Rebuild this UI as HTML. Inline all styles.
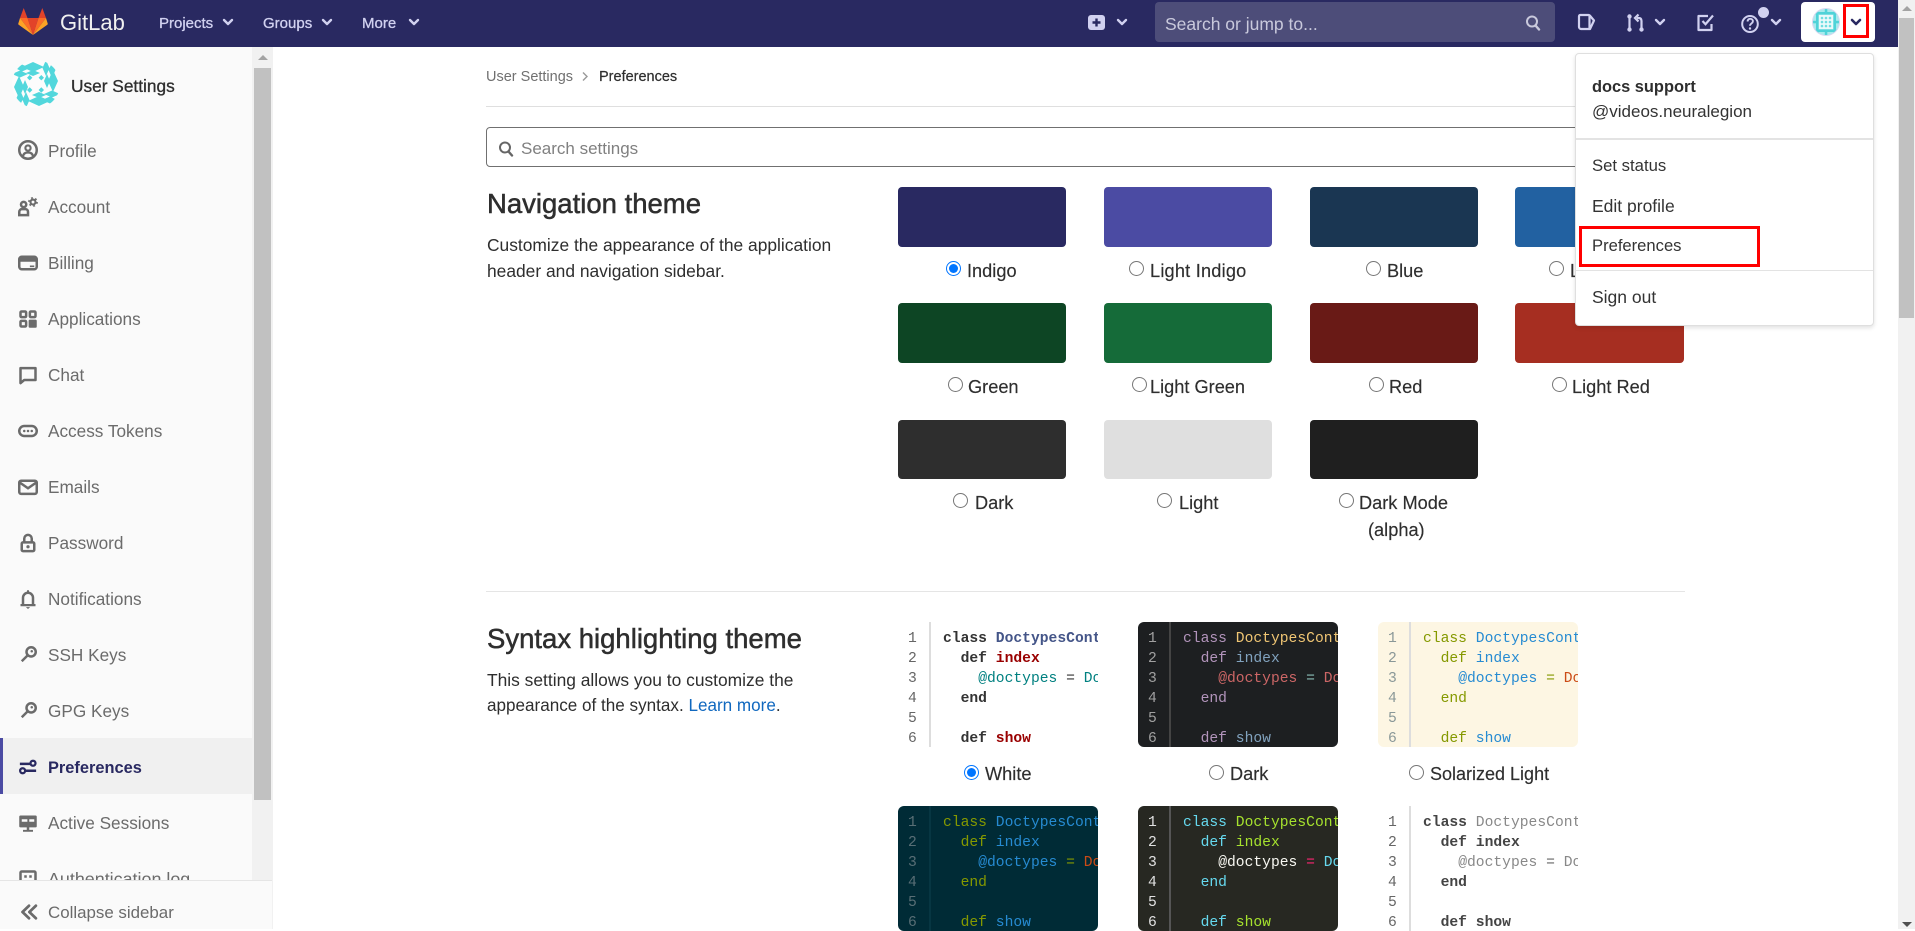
<!DOCTYPE html>
<html lang="en"><head><meta charset="utf-8"><title>Preferences · User Settings · GitLab</title>
<style>
html,body{margin:0;padding:0;width:1915px;height:929px;overflow:hidden;background:#fff;font-family:"Liberation Sans",sans-serif;color:#2e2e2e}
.a,.t,svg.i{position:absolute}
.t{white-space:nowrap;line-height:20px}
.n{font-size:15px;color:#d1d1f0;-webkit-text-stroke:.3px #d1d1f0;top:14px}
.s{font-size:17.2px;color:#6b6b6b;left:48px}
.m{font-size:17px;color:#333;left:1592px}
.l{font-size:18.2px;color:#2e2e2e;-webkit-text-stroke:.15px #2e2e2e}
.h{font-size:27.5px;line-height:32px;color:#2e2e2e;-webkit-text-stroke:.5px #2e2e2e}
.d{font-size:17.4px;color:#2e2e2e}
input{position:absolute;width:15px;height:15px;margin:0}
.sw{position:absolute;width:168px;height:60px;border-radius:4px}
.cb{position:absolute;width:200px;height:125px;overflow:hidden;border-radius:6px;font:14.67px/20px "Liberation Mono",monospace}
.cb pre{margin:0;font:inherit;position:absolute;top:7px}
.cb .nm{left:10px}.cb .cd{left:45px;width:155px;overflow:hidden}
.cb .g{position:absolute;left:31px;top:0;bottom:0;width:2px}
.w{background:#fff}.w .g{background:#ddd}.w .nm{color:#666}.w .k{color:#333;font-weight:bold}.w .c{color:#458;font-weight:bold}.w .f{color:#900;font-weight:bold}.w .v{color:#008080}.w .o{color:#333}.w .e{color:#008080}
.dk{background:#1d1f21}.dk .g{background:#444}.dk .nm{color:#a0a0a0}.dk .k{color:#b294bb}.dk .c{color:#f0c674}.dk .f{color:#81a2be}.dk .v{color:#c66}.dk .o{color:#8abeb7}.dk .e{color:#c66}
.sl{background:#fdf6e3}.sl .g{background:#ddd}.sl .nm{color:#8a9898}.sl .k{color:#859900}.sl .c,.sl .f,.sl .v{color:#268bd2}.sl .o{color:#859900}.sl .e{color:#cb4b16}
.sd{background:#002b36}.sd .g{background:#073642}.sd .nm{color:#586e75}.sd .k{color:#859900}.sd .c,.sd .f,.sd .v{color:#268bd2}.sd .o{color:#859900}.sd .e{color:#cb4b16}
.mk{background:#272822}.mk .g{background:#555}.mk .nm{color:#e0e0e0}.mk .k{color:#66d9ef}.mk .c,.mk .f{color:#a6e22e}.mk .v{color:#f8f8f2}.mk .o{color:#f92672}.mk .e{color:#66d9ef}
.no{background:#fff}.no .g{background:#ddd}.no .nm{color:#666}.no .k,.no .f{color:#444;font-weight:bold}.no .c,.no .v,.no .e{color:#888}.no .o{color:#666}
.ic{fill:none;stroke:#6b6b6b;stroke-width:2}
.if{fill:#6b6b6b;stroke:none}
.ch{fill:none;stroke:#d1d1f0;stroke-width:2.4;stroke-linecap:round;stroke-linejoin:round}
</style></head><body>

<svg width="0" height="0" style="position:absolute"><defs>
<clipPath id="cl"><circle cx="24" cy="24" r="24"/></clipPath>
<path id="qt" d="M10 7L21 2l11 5-11 5zM14 13l7-3 7 3-7 3zM34 0l3.500 8L34 16l-3.500-8zM40 3l3.500 7-3.500 8-3.500-8z"/>
<g id="av" clip-path="url(#cl)"><circle cx="24" cy="24" r="24" fill="#fcfcfc"/>
<g fill="#52d7dc">
<use href="#qt"/><use href="#qt" transform="rotate(90 24 24)"/><use href="#qt" transform="rotate(180 24 24)"/><use href="#qt" transform="rotate(270 24 24)"/>
<path d="M17.700 15l2.700 2.700-2.700 2.700-2.700-2.700zM29.300 15l2.700 2.700-2.700 2.700-2.700-2.700zM17.700 27.300l2.700 2.700-2.700 2.700-2.700-2.700zM29.300 27.300l2.700 2.700-2.700 2.700-2.700-2.700z"/>
</g></g>
<clipPath id="cs"><circle cx="14" cy="14" r="13.500"/></clipPath>
</defs></svg>

<!-- sidebar -->
<div class="a" style="left:0;top:47px;width:273px;height:882px;background:#fafafa;overflow:hidden">
  <div class="a" style="left:252px;top:0;width:21px;height:882px;background:#f1f1f1"></div>
  <div class="a" style="left:254px;top:21px;width:17px;height:732px;background:#c1c1c1"></div>
  <div class="a" style="left:258px;top:8px;width:0;height:0;border-left:5px solid transparent;border-right:5px solid transparent;border-bottom:5px solid #a3a3a3"></div>
  <div class="a" style="left:0;top:691px;width:252px;height:56px;background:#f0f0f0"></div>
  <div class="a" style="left:0;top:691px;width:3px;height:56px;background:#4b4ba3"></div>
</div>
<svg class="i" style="left:12px;top:60px" width="48" height="48" viewBox="0 0 48 48"><use href="#av"/></svg>
<div class="t" style="left:71px;top:76px;font-size:17.3px;color:#2e2e2e;-webkit-text-stroke:.3px #2e2e2e">User Settings</div>

<div class="t s" style="top:141px">Profile</div>
<svg class="i" style="left:18px;top:140px" width="20" height="20" viewBox="0 0 16 16"><circle class="ic" cx="8" cy="8" r="7"/><circle cx="8" cy="6.400" r="2.100" fill="none" stroke="#6b6b6b" stroke-width="1.700"/><path d="M4 13c.3-2 1.800-3 4-3s3.700 1 4 3" fill="none" stroke="#6b6b6b" stroke-width="1.800"/></svg>
<div class="t s" style="top:197px">Account</div>
<svg class="i" style="left:18px;top:197px" width="20" height="20" viewBox="0 0 16 16"><circle class="ic" cx="4.500" cy="6" r="2.100" stroke-width="1.800"/><path class="ic" d="M1 14.500v-2.500c0-1.300 1-2.300 2-2.300h3c1.200 0 2 1 2 2.300v2.500z" stroke-width="1.800"/><circle cx="12" cy="4" r="2" fill="none" stroke="#6b6b6b" stroke-width="1.700"/><circle cx="12" cy="4" r="3.300" fill="none" stroke="#6b6b6b" stroke-width="1.200" stroke-dasharray="1.500 1.960"/></svg>
<div class="t s" style="top:253px">Billing</div>
<svg class="i" style="left:18px;top:253px" width="20" height="20" viewBox="0 0 16 16"><rect class="ic" x="1" y="3" width="14" height="10" rx="2"/><rect class="if" x="1" y="4" width="14" height="3"/><rect class="if" x="9.500" y="10" width="3.500" height="1.300"/></svg>
<div class="t s" style="top:309px">Applications</div>
<svg class="i" style="left:18px;top:309px" width="20" height="20" viewBox="0 0 16 16"><rect class="ic" x="2" y="2" width="4.500" height="4.500" rx=".8"/><rect class="ic" x="9.500" y="2" width="4.500" height="4.500" rx=".8"/><rect class="ic" x="2" y="9.500" width="4.500" height="4.500" rx=".8"/><rect class="if" x="8.500" y="8.500" width="6.500" height="6.500" rx="1"/></svg>
<div class="t s" style="top:365px">Chat</div>
<svg class="i" style="left:18px;top:365px" width="20" height="20" viewBox="0 0 16 16"><path class="ic" d="M2 2.500h12v9.500H5l-3 2.500z" stroke-linejoin="round"/></svg>
<div class="t s" style="top:421px">Access Tokens</div>
<svg class="i" style="left:18px;top:421px" width="20" height="20" viewBox="0 0 16 16"><rect class="ic" x="1" y="4" width="14" height="8" rx="4"/><circle class="if" cx="5" cy="8" r="1"/><circle class="if" cx="8" cy="8" r="1"/><circle class="if" cx="11" cy="8" r="1"/></svg>
<div class="t s" style="top:477px">Emails</div>
<svg class="i" style="left:18px;top:477px" width="20" height="20" viewBox="0 0 16 16"><rect class="ic" x="1" y="3" width="14" height="10.500" rx="1.500"/><path class="ic" d="M1.500 4.500L8 9l6.500-4.500"/></svg>
<div class="t s" style="top:533px">Password</div>
<svg class="i" style="left:18px;top:533px" width="20" height="20" viewBox="0 0 16 16"><path class="ic" d="M5 7V4.500a3 3 0 016 0V7" stroke-width="1.800"/><rect class="ic" x="3" y="7.500" width="10" height="7" rx="1"/><circle class="if" cx="8" cy="11" r="1.300"/></svg>
<div class="t s" style="top:589px">Notifications</div>
<svg class="i" style="left:18px;top:589px" width="20" height="20" viewBox="0 0 16 16"><path class="ic" d="M4 12.500V7a4 4 0 018 0v5.500" stroke-width="1.900"/><path class="if" d="M2 12h12v1.800H2zM6.300 14.500h3.400L8 16z"/><rect class="if" x="7.200" y="1" width="1.600" height="2"/></svg>
<div class="t s" style="top:645px">SSH Keys</div>
<svg class="i" style="left:18px;top:645px" width="20" height="20" viewBox="0 0 16 16"><circle class="ic" cx="10.500" cy="5.500" r="3.700"/><path class="ic" d="M7.800 8.200L3 13" stroke-width="3"/><circle class="if" cx="11" cy="5" r="1"/></svg>
<div class="t s" style="top:701px">GPG Keys</div>
<svg class="i" style="left:18px;top:701px" width="20" height="20" viewBox="0 0 16 16"><circle class="ic" cx="10.500" cy="5.500" r="3.700"/><path class="ic" d="M7.800 8.200L3 13" stroke-width="3"/><circle class="if" cx="11" cy="5" r="1"/></svg>
<div class="t s" style="top:758px;color:#292961;font-weight:bold;font-size:16.400px">Preferences</div>
<svg class="i" style="left:18px;top:757px" width="20" height="20" viewBox="0 0 16 16"><path d="M1.500 5.500H10M6 11h8.500" stroke="#292961" stroke-width="2" fill="none"/><circle cx="12" cy="5" r="2" fill="none" stroke="#292961" stroke-width="1.800"/><circle cx="3.700" cy="11" r="2" fill="none" stroke="#292961" stroke-width="1.800"/></svg>
<div class="t s" style="top:813px">Active Sessions</div>
<svg class="i" style="left:18px;top:813px" width="20" height="20" viewBox="0 0 16 16"><rect class="if" x="1" y="2" width="14" height="9.500" rx="1"/><rect x="3" y="5" width="4.500" height="2" fill="#fafafa"/><rect x="9" y="5" width="4" height="2" fill="#fafafa"/><path class="if" d="M7 11h2v2.500h3V15H4v-1.500h3z"/></svg>
<div class="t s" style="top:869px;font-size:17.900px">Authentication log</div>
<svg class="i" style="left:18px;top:869px" width="20" height="20" viewBox="0 0 16 16"><rect class="ic" x="2" y="2" width="12" height="12" rx="1"/><g class="if"><rect x="5" y="5" width="2" height="2"/><rect x="9" y="5" width="2" height="2"/><rect x="5" y="9" width="2" height="2"/><rect x="9" y="9" width="2" height="2"/></g></svg>
<div class="a" style="left:0;top:880px;width:272px;height:49px;background:#fafafa;border-top:1px solid #e5e5e5;box-sizing:border-box"></div>
<div class="t s" style="top:903px;font-size:16.900px">Collapse sidebar</div>
<svg class="i" style="left:19px;top:902px" width="20" height="20" viewBox="0 0 16 16"><path d="M8 3L2.800 8 8 13M13.500 3L8.300 8l5.200 5" fill="none" stroke="#6b6b6b" stroke-width="2.200" stroke-linecap="round" stroke-linejoin="round"/></svg>

<!-- header -->
<div class="a" style="left:0;top:0;width:1898px;height:47px;background:#292961"></div>
<svg class="i" style="left:18px;top:8px" width="30" height="27" viewBox="0 0 30 27"><path fill="#e24329" d="M15 27L9.500 10h11zM2 10L5.700 0l3.800 10zM28 10L24.300 0l-3.800 10z"/><path fill="#fc6d26" d="M15 27L9.500 10H2zM15 27l5.500-17H28z"/><path fill="#fca326" d="M2 10L.3 15.500c-.2.500 0 1 .4 1.300L15 27zM28 10l1.700 5.500c.2.500 0 1-.4 1.300L15 27z"/></svg>
<div class="t" style="left:60px;top:13px;font-size:22px;color:#f0f0f0">GitLab</div>
<div class="t n" style="left:159px">Projects</div>
<svg class="i" style="left:222px;top:18px" width="12" height="9" viewBox="0 0 12 9"><path class="ch" d="M2 2l4 4 4-4"/></svg>
<div class="t n" style="left:263px">Groups</div>
<svg class="i" style="left:321px;top:18px" width="12" height="9" viewBox="0 0 12 9"><path class="ch" d="M2 2l4 4 4-4"/></svg>
<div class="t n" style="left:362px">More</div>
<svg class="i" style="left:408px;top:18px" width="12" height="9" viewBox="0 0 12 9"><path class="ch" d="M2 2l4 4 4-4"/></svg>

<svg class="i" style="left:1088px;top:14px" width="17" height="17" viewBox="0 0 17 17"><rect x="0" y="1" width="17" height="15" rx="3" fill="#d1d1f0"/><path d="M8.500 4.500v8M4.500 8.500h8" stroke="#292961" stroke-width="2.400"/></svg>
<svg class="i" style="left:1116px;top:18px" width="12" height="9" viewBox="0 0 12 9"><path class="ch" d="M2 2l4 4 4-4"/></svg>
<div class="a" style="left:1155px;top:2px;width:400px;height:40px;background:#4d4d79;border-radius:4px"></div>
<div class="t" style="left:1165px;top:14px;font-size:17.500px;color:#c9c9dc">Search or jump to...</div>
<svg class="i" style="left:1525px;top:15px" width="16" height="16" viewBox="0 0 16 16"><circle cx="7" cy="6.500" r="5" fill="none" stroke="#c9c9dc" stroke-width="2"/><path d="M10.500 10.500L14 14.500" stroke="#c9c9dc" stroke-width="2.400" stroke-linecap="round"/></svg>
<!-- issues -->
<svg class="i" style="left:1577px;top:13px" width="20" height="20" viewBox="0 0 20 20"><path d="M3 2h8.500c.6 0 1 .2 1.300.5l4.200 5-4 8.500H4c-1 0-2-1-2-2V3.500C2 2.700 2.400 2 3 2zM12.500 2.500V15" fill="none" stroke="#d1d1f0" stroke-width="2.200" stroke-linejoin="round"/></svg>
<!-- merge requests -->
<svg class="i" style="left:1626px;top:13px" width="20" height="20" viewBox="0 0 20 20"><path d="M3.500 5v10M15.500 15V8c0-1.800-1-3-3-3H11" fill="none" stroke="#d1d1f0" stroke-width="2.200"/><path d="M12.500 1.500L9 5l3.500 3.500" fill="none" stroke="#d1d1f0" stroke-width="2.200"/><circle cx="3.500" cy="3.500" r="2.200" fill="#d1d1f0"/><circle cx="3.500" cy="16.500" r="2.200" fill="#d1d1f0"/><circle cx="15.500" cy="16.500" r="2.200" fill="#d1d1f0"/></svg>
<svg class="i" style="left:1654px;top:18px" width="12" height="9" viewBox="0 0 12 9"><path class="ch" d="M2 2l4 4 4-4"/></svg>
<!-- todos -->
<svg class="i" style="left:1696px;top:13px" width="19" height="19" viewBox="0 0 19 19"><path d="M12 3H2.500v14h13V11" fill="none" stroke="#d1d1f0" stroke-width="2.200" stroke-linejoin="round"/><path d="M6.500 8l3 3.200L17 2.500" fill="none" stroke="#d1d1f0" stroke-width="2.200"/></svg>
<!-- help -->
<svg class="i" style="left:1741px;top:14px" width="18" height="19" viewBox="0 0 18 19"><ellipse cx="9" cy="10" rx="7.800" ry="8" fill="none" stroke="#d1d1f0" stroke-width="2"/><path d="M6.500 7.500c.3-2 1.500-2.700 2.700-2.700 1.500 0 2.700 1 2.700 2.400 0 2.200-2.900 2.300-2.900 4.600" fill="none" stroke="#d1d1f0" stroke-width="1.900"/><circle cx="9" cy="14.500" r="1.200" fill="#d1d1f0"/></svg>
<div class="a" style="left:1758px;top:7px;width:11px;height:11px;border-radius:50%;background:#d1d1f0"></div>
<svg class="i" style="left:1770px;top:18px" width="12" height="9" viewBox="0 0 12 9"><path class="ch" d="M2 2l4 4 4-4"/></svg>
<div class="a" style="left:1801px;top:2px;width:74px;height:40px;background:#fff;border-radius:4px"></div>
<svg class="i" style="left:1812px;top:8px" width="28" height="28" viewBox="0 0 28 28"><g clip-path="url(#cs)"><rect width="28" height="28" fill="#a9eaed"/>
<g fill="#4fd3d8"><rect x="0" y="4" width="28" height="2.500"/><rect x="0" y="21.500" width="28" height="2.500"/><rect x="4" y="0" width="2.500" height="28"/><rect x="21.500" y="0" width="2.500" height="28"/><rect x="0" y="12.800" width="6" height="2.500"/><rect x="22" y="12.800" width="6" height="2.500"/><rect x="12.800" y="0" width="2.500" height="6"/><rect x="12.800" y="22" width="2.500" height="6"/></g>
<rect x="7" y="7" width="14" height="14" fill="#eafafb"/>
<g fill="#6fdde1"><circle cx="10" cy="10" r="1.300"/><circle cx="14" cy="10" r="1.300"/><circle cx="18" cy="10" r="1.300"/><circle cx="10" cy="14" r="1.300"/><circle cx="14" cy="14" r="1.300"/><circle cx="18" cy="14" r="1.300"/><circle cx="10" cy="18" r="1.300"/><circle cx="14" cy="18" r="1.300"/><circle cx="18" cy="18" r="1.300"/></g></g><circle cx="14" cy="14" r="13.500" fill="none" stroke="#d8d8f0" stroke-width="1"/></svg>
<div class="a" style="left:1843px;top:4px;width:26px;height:34px;border:3px solid #f00;box-sizing:border-box"></div>
<svg class="i" style="left:1850px;top:18px" width="12" height="9" viewBox="0 0 12 9"><path d="M2 2l4 4 4-4" fill="none" stroke="#292961" stroke-width="2.600" stroke-linecap="round" stroke-linejoin="round"/></svg>

<!-- page scrollbar -->
<div class="a" style="left:1898px;top:0;width:17px;height:929px;background:#f1f1f1"></div>
<div class="a" style="left:1899px;top:18px;width:15px;height:300px;background:#c1c1c1"></div>
<div class="a" style="left:1902px;top:6px;width:0;height:0;border-left:5px solid transparent;border-right:5px solid transparent;border-bottom:5px solid #a3a3a3"></div>
<div class="a" style="left:1902px;top:922px;width:0;height:0;border-left:5px solid transparent;border-right:5px solid transparent;border-top:5px solid #505050"></div>

<!-- content -->
<div class="t" style="left:486px;top:67px;font-size:14.500px;color:#707070">User Settings</div>
<svg class="i" style="left:581px;top:71px" width="8" height="11" viewBox="0 0 8 11"><path d="M2 1.500l4 4-4 4" fill="none" stroke="#999" stroke-width="1.400"/></svg>
<div class="t" style="left:599px;top:67px;font-size:14.500px;color:#2e2e2e;-webkit-text-stroke:.2px #2e2e2e">Preferences</div>
<div class="a" style="left:486px;top:106px;width:1199px;height:1px;background:#dfdfdf"></div>
<div class="a" style="left:486px;top:127px;width:1199px;height:40px;border:1px solid #707070;border-radius:4px;box-sizing:border-box"></div>
<svg class="i" style="left:498px;top:141px" width="16" height="16" viewBox="0 0 16 16"><circle cx="7" cy="6.500" r="5" fill="none" stroke="#666" stroke-width="2"/><path d="M10.500 10.500L14 14.500" stroke="#666" stroke-width="2.400" stroke-linecap="round"/></svg>
<div class="t" style="left:521px;top:139px;font-size:17px;color:#808080">Search settings</div>

<div class="t h" style="left:487px;top:188px">Navigation theme</div>
<div class="t d" style="left:487px;top:235px">Customize the appearance of the application</div>
<div class="t d" style="left:487px;top:261px">header and navigation sidebar.</div>

<div class="sw" style="left:898px;top:187px;background:#292961"></div>
<div class="sw" style="left:1104px;top:187px;background:#4b4ba3"></div>
<div class="sw" style="left:1310px;top:187px;background:#1a3652"></div>
<div class="sw" style="left:1515px;top:187px;width:169px;background:#2261a1"></div>
<div class="sw" style="left:898px;top:303px;background:#0d4524"></div>
<div class="sw" style="left:1104px;top:303px;background:#156b39"></div>
<div class="sw" style="left:1310px;top:303px;background:#691a16"></div>
<div class="sw" style="left:1515px;top:303px;width:169px;background:#a62e21"></div>
<div class="sw" style="left:898px;top:420px;height:59px;background:#2e2e2e"></div>
<div class="sw" style="left:1104px;top:420px;height:59px;background:#dfdfdf"></div>
<div class="sw" style="left:1310px;top:420px;height:59px;background:#1f1f1f"></div>

<input type="radio" checked style="left:946px;top:261px"><div class="t l" style="left:967px;top:261px">Indigo</div>
<input type="radio" style="left:1129px;top:261px"><div class="t l" style="left:1150px;top:261px;letter-spacing:.2px">Light Indigo</div>
<input type="radio" style="left:1366px;top:261px"><div class="t l" style="left:1387px;top:261px">Blue</div>
<input type="radio" style="left:1549px;top:261px"><div class="t l" style="left:1570px;top:261px">Light Blue</div>
<input type="radio" style="left:948px;top:377px"><div class="t l" style="left:968px;top:377px">Green</div>
<input type="radio" style="left:1132px;top:377px"><div class="t l" style="left:1150px;top:377px">Light Green</div>
<input type="radio" style="left:1369px;top:377px"><div class="t l" style="left:1389px;top:377px">Red</div>
<input type="radio" style="left:1552px;top:377px"><div class="t l" style="left:1572px;top:377px">Light Red</div>
<input type="radio" style="left:953px;top:493px"><div class="t l" style="left:975px;top:493px">Dark</div>
<input type="radio" style="left:1157px;top:493px"><div class="t l" style="left:1179px;top:493px">Light</div>
<input type="radio" style="left:1339px;top:493px"><div class="t l" style="left:1359px;top:493px">Dark Mode</div>
<div class="t l" style="left:1368px;top:520px">(alpha)</div>

<div class="a" style="left:486px;top:591px;width:1199px;height:1px;background:#e5e5e5"></div>
<div class="t h" style="left:487px;top:623px">Syntax highlighting theme</div>
<div class="t d" style="left:487px;top:670px">This setting allows you to customize the</div>
<div class="t d" style="left:487px;top:696px;font-size:17.100px">appearance of the syntax. <span style="color:#1068bf">Learn more</span>.</div>

<div class="cb w" style="left:898px;top:622px"><div class="g"></div><pre class="nm">1
2
3
4
5
6</pre><pre class="cd"><span class="k">class</span> <span class="c">DoctypesController</span>
  <span class="k">def</span> <span class="f">index</span>
    <span class="v">@doctypes</span> <span class="o">=</span> <span class="e">Doctype</span>
  <span class="k">end</span>

  <span class="k">def</span> <span class="f">show</span></pre></div>

<div class="cb dk" style="left:1138px;top:622px"><div class="g"></div><pre class="nm">1
2
3
4
5
6</pre><pre class="cd"><span class="k">class</span> <span class="c">DoctypesController</span>
  <span class="k">def</span> <span class="f">index</span>
    <span class="v">@doctypes</span> <span class="o">=</span> <span class="e">Doctype</span>
  <span class="k">end</span>

  <span class="k">def</span> <span class="f">show</span></pre></div>

<div class="cb sl" style="left:1378px;top:622px"><div class="g"></div><pre class="nm">1
2
3
4
5
6</pre><pre class="cd"><span class="k">class</span> <span class="c">DoctypesController</span>
  <span class="k">def</span> <span class="f">index</span>
    <span class="v">@doctypes</span> <span class="o">=</span> <span class="e">Doctype</span>
  <span class="k">end</span>

  <span class="k">def</span> <span class="f">show</span></pre></div>

<input type="radio" checked style="left:964px;top:765px"><div class="t l" style="left:985px;top:764px">White</div>
<input type="radio" style="left:1209px;top:765px"><div class="t l" style="left:1230px;top:764px">Dark</div>
<input type="radio" style="left:1409px;top:765px"><div class="t l" style="left:1430px;top:764px;font-size:18px">Solarized Light</div>

<div class="cb sd" style="left:898px;top:806px"><div class="g"></div><pre class="nm">1
2
3
4
5
6</pre><pre class="cd"><span class="k">class</span> <span class="c">DoctypesController</span>
  <span class="k">def</span> <span class="f">index</span>
    <span class="v">@doctypes</span> <span class="o">=</span> <span class="e">Doctype</span>
  <span class="k">end</span>

  <span class="k">def</span> <span class="f">show</span></pre></div>

<div class="cb mk" style="left:1138px;top:806px"><div class="g"></div><pre class="nm">1
2
3
4
5
6</pre><pre class="cd"><span class="k">class</span> <span class="c">DoctypesController</span>
  <span class="k">def</span> <span class="f">index</span>
    <span class="v">@doctypes</span> <span class="o">=</span> <span class="e">Doctype</span>
  <span class="k">end</span>

  <span class="k">def</span> <span class="f">show</span></pre></div>

<div class="cb no" style="left:1378px;top:806px"><div class="g"></div><pre class="nm">1
2
3
4
5
6</pre><pre class="cd"><span class="k">class</span> <span class="c">DoctypesController</span>
  <span class="k">def</span> <span class="f">index</span>
    <span class="v">@doctypes</span> <span class="o">=</span> <span class="e">Doctype</span>
  <span class="k">end</span>

  <span class="k">def</span> <span class="f">show</span></pre></div>

<!-- dropdown -->
<div class="a" style="left:1575px;top:53px;width:299px;height:273px;background:#fff;border:1px solid #dfdfdf;border-radius:4px;box-sizing:border-box;box-shadow:0 2px 4px rgba(0,0,0,.12)"></div>
<div class="t m" style="left:1592px;top:77px;font-weight:bold;font-size:16.400px;color:#2e2e2e">docs support</div>
<div class="t m" style="top:102px">@videos.neuralegion</div>
<div class="a" style="left:1576px;top:138px;width:297px;height:2px;background:#e3e3e3"></div>
<div class="t m" style="top:156px;font-size:16.700px">Set status</div>
<div class="t m" style="top:196px;font-size:17.500px">Edit profile</div>
<div class="t m" style="top:236px;font-size:16.600px">Preferences</div>
<div class="a" style="left:1579px;top:226px;width:181px;height:41px;border:3px solid #f00;box-sizing:border-box"></div>
<div class="a" style="left:1576px;top:270px;width:297px;height:1px;background:#e3e3e3"></div>
<div class="t m" style="top:287px;font-size:17.500px">Sign out</div>

</body></html>
